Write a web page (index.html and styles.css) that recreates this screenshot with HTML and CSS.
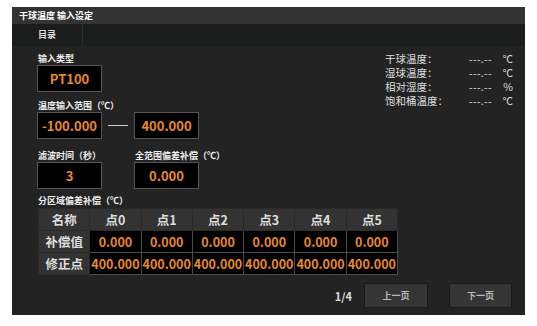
FILE: index.html
```html
<!DOCTYPE html>
<html lang="zh">
<head>
  <meta charset="UTF-8" />
  <title>干球温度 输入设定</title>
  <link rel="stylesheet" href="styles.css">
</head>
<body>
  <div class="panel">
    <div class="titlebar">干球温度 输入设定</div>
    <div class="tabs">
      <div class="tab">目录</div>
    </div>

    <div class="content">
      <div class="left">
        <div class="field">
          <div class="label">输入类型</div>
          <div class="box">PT100</div>
        </div>

        <div class="field gap-a">
          <div class="label">温度输入范围（℃）</div>
          <div class="row">
            <div class="box">-100.000</div>
            <div class="dash"></div>
            <div class="box">400.000</div>
          </div>
        </div>

        <div class="row gap-b">
          <div class="field">
            <div class="label">滤波时间（秒）</div>
            <div class="box">3</div>
          </div>
          <div class="field second">
            <div class="label">全范围偏差补偿（℃）</div>
            <div class="box">0.000</div>
          </div>
        </div>

        <div class="field gap-c">
          <div class="label">分区域偏差补偿（℃）</div>
          <table class="points">
            <tr class="head">
              <th>名称</th><th>点0</th><th>点1</th><th>点2</th><th>点3</th><th>点4</th><th>点5</th>
            </tr>
            <tr>
              <th>补偿值</th><td>0.000</td><td>0.000</td><td>0.000</td><td>0.000</td><td>0.000</td><td>0.000</td>
            </tr>
            <tr>
              <th>修正点</th><td>400.000</td><td>400.000</td><td>400.000</td><td>400.000</td><td>400.000</td><td>400.000</td>
            </tr>
          </table>
        </div>
      </div>

      <div class="info">
        <span class="name">干球温度：</span><span class="val">---.--</span><span class="unit">℃</span>
        <span class="name">湿球温度：</span><span class="val">---.--</span><span class="unit">℃</span>
        <span class="name">相对湿度：</span><span class="val">---.--</span><span class="unit">%</span>
        <span class="name">饱和桶温度：</span><span class="val">---.--</span><span class="unit">℃</span>
      </div>
    </div>

    <div class="pager">
      <span class="page-no">1/4</span>
      <button class="btn">上一页</button>
      <button class="btn next">下一页</button>
    </div>
  </div>
</body>
</html>
```

FILE: styles.css
```css
:root {
  --panel: #222322;
  --title: #333333;
  --tabbar: #1b1d1c;
  --cell: #333333;
  --line: #4a4a4a;
  --orange: #e8892c;
  --text: #e6e6e6;
}

* {
  margin: 0;
  padding: 0;
  box-sizing: border-box;
}

body {
  background: #ffffff;
  font-family: "Noto Sans CJK SC", "Noto Sans", sans-serif;
  color: var(--text);
}

.panel {
  margin: 7px 0 0 12px;
  width: 513px;
  height: 308px;
  background: var(--panel);
  display: flex;
  flex-direction: column;
}

.titlebar {
  height: 17px;
  line-height: 17px;
  padding-left: 7px;
  background: var(--title);
  font-size: 9px;
  font-weight: 700;
  color: #ffffff;
}

.tabs {
  height: 22px;
  background: var(--tabbar);
  display: flex;
}

.tab {
  width: 71px;
  line-height: 22px;
  text-align: center;
  font-size: 9px;
  font-weight: 700;
  border-right: 1px solid #2c2e2d;
  color: #dddddd;
}

.content {
  display: flex;
  justify-content: space-between;
  align-items: flex-start;
  padding: 6px 12px 0 25px;
}

/* the table runs under the info column, so keep this narrower than it */
.left {
  flex: 0 0 348px;
  min-width: 0;
}

.label {
  font-size: 9px;
  font-weight: 700;
  line-height: 13px;
  color: #eeeeee;
  margin-left: 1px;
  white-space: nowrap;
}

.box {
  width: 65px;
  height: 27px;
  border: 1px solid #555555;
  background: #000000;
  color: var(--orange);
  font-size: 13px;
  font-weight: 700;
  display: flex;
  align-items: center;
  justify-content: center;
}

.row {
  display: flex;
  align-items: center;
}

.dash {
  width: 20px;
  height: 1px;
  background: #cccccc;
  margin: 0 6px;
}

.second {
  margin-left: 32px;
}

.gap-a {
  margin-top: 7px;
}

.gap-b {
  margin-top: 10px;
}

.gap-c {
  margin-top: 5px;
}

.points {
  margin-top: 1px;
  margin-left: 1px;
  border-collapse: collapse;
  table-layout: fixed;
  width: 360px;
  font-size: 12.5px;
  font-weight: 700;
}

.points th,
.points td {
  height: 22px;
  text-align: center;
  border: 1px solid var(--line);
}

.points th {
  background: var(--cell);
  color: #dddddd;
  width: 51px;
  border-color: #2a2a2a;
}

.points td {
  background: #000000;
  color: var(--orange);
  width: 51.5px;
}

.info {
  width: 128px;
  display: grid;
  grid-template-columns: 84px 30px 14px;
  font-size: 10.5px;
  line-height: 14px;
  color: #dddddd;
  white-space: nowrap;
}

.val {
  letter-spacing: 0.3px;
}

.unit {
  text-align: right;
}

.pager {
  margin-top: auto;
  padding: 0 13px 7px 0;
  display: flex;
  justify-content: flex-end;
  align-items: center;
}

.page-no {
  font-size: 11px;
  font-weight: 700;
  color: #dddddd;
  margin-right: 12px;
}

.btn {
  width: 64px;
  height: 25px;
  background: #353535;
  border: 1px solid #1a1a1a;
  color: #bbbbbb;
  font-family: inherit;
  font-size: 9px;
  font-weight: 700;
}

.next {
  margin-left: 21px;
  width: 63px;
}
```
